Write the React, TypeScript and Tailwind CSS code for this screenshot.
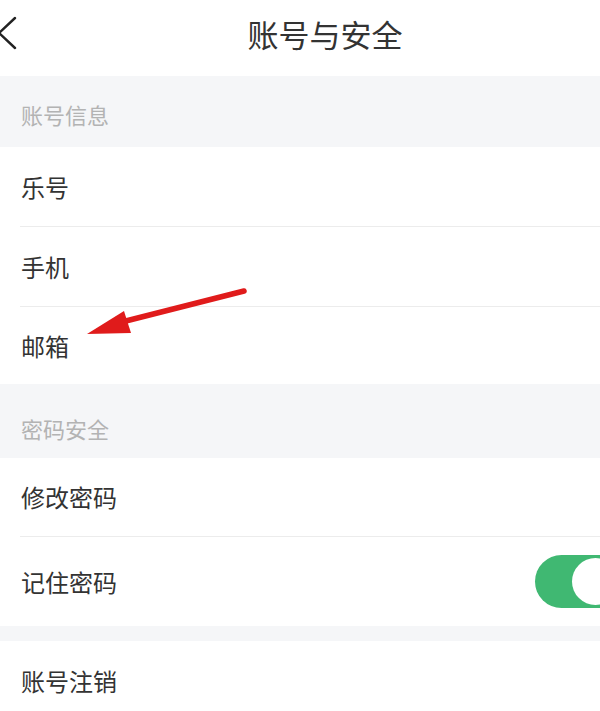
import React from "react";

const font = { fontFamily: '"Noto Sans CJK SC", "Noto Sans", sans-serif' };

function Row({ label, divider, h, children }: { label: string; divider?: boolean; h: string; children?: React.ReactNode }) {
  return (
    <div className={`bg-white pl-5 ${h}`}>
      <div className={`flex h-full items-center justify-between ${divider ? "border-b border-[#ececec]" : ""}`}>
        <span className="text-[24px] leading-none text-[#333] pl-[1px]">{label}</span>
        {children}
      </div>
    </div>
  );
}

export default function App() {
  return (
    <div className="relative w-[600px] h-[711px] overflow-hidden bg-white" style={font}>
      {/* Header */}
      <div className="relative flex h-[76px] items-center bg-white">
        <svg className="absolute left-0 top-[16px]" width="20" height="36" viewBox="0 0 20 36">
          <polyline points="15,2 -1,17 15,32" fill="none" stroke="#222" strokeWidth="2.4" strokeLinecap="round" strokeLinejoin="round" />
        </svg>
        <div className="flex-1 pl-[50px] text-center text-[31px] leading-none text-[#333] -mt-[9px]">账号与安全</div>
      </div>

      {/* Section 1 */}
      <div className="flex h-[71px] items-center bg-[#f5f6f8] pl-[21px] pt-[5px]">
        <span className="text-[22px] leading-none text-[#b3b3b3]">账号信息</span>
      </div>
      <Row label="乐号" divider h="h-[80px]" />
      <Row label="手机" divider h="h-[80px]" />
      <Row label="邮箱" h="h-[77px]" />

      {/* Section 2 */}
      <div className="flex h-[74px] items-center bg-[#f5f6f8] pl-[21px] pt-[14px]">
        <span className="text-[22px] leading-none text-[#b3b3b3]">密码安全</span>
      </div>
      <Row label="修改密码" divider h="h-[79px]" />
      <Row label="记住密码" h="h-[89px]">
        <div className="-mr-[40px] flex h-[53px] w-[105px] items-center rounded-full bg-[#40b872] pl-[37px]">
          <div className="h-[47px] w-[47px] rounded-full bg-white" />
        </div>
      </Row>
      <div className="h-[15px] bg-[#f5f6f8]" />
      <Row label="账号注销" h="h-[80px]" />

      {/* Red arrow annotation */}
      <svg className="absolute left-0 top-0 pointer-events-none" width="600" height="711" viewBox="0 0 600 711">
        <line x1="244" y1="291" x2="110" y2="325" stroke="#e01b1b" strokeWidth="5.5" strokeLinecap="round" />
        <polygon points="87,334 124,311 131,333" fill="#e01b1b" />
      </svg>
    </div>
  );
}
